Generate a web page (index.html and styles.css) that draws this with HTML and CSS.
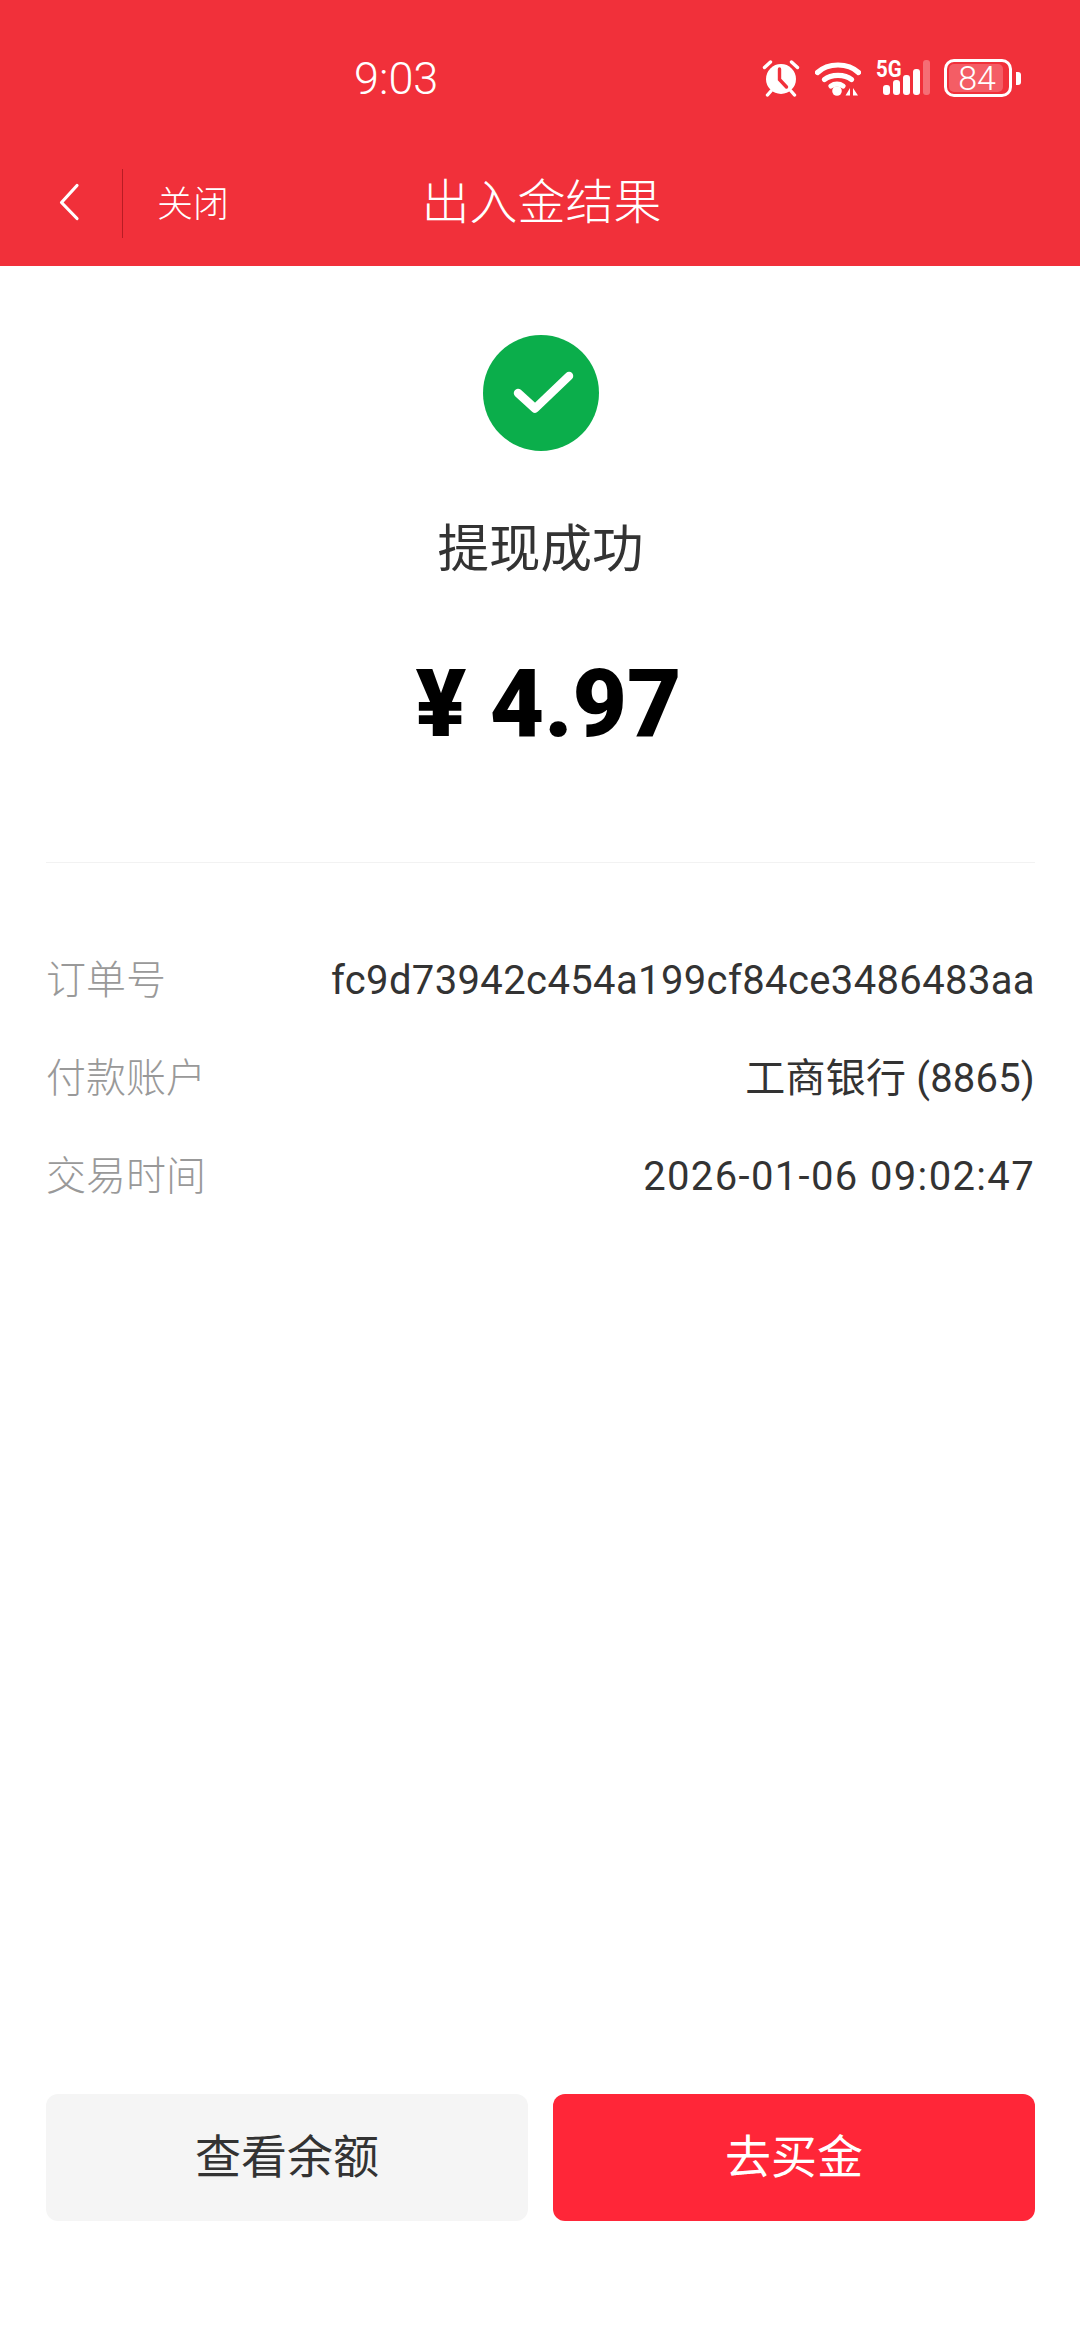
FILE: index.html
```html
<!DOCTYPE html>
<html lang="zh-CN">
<head>
<meta charset="utf-8">
<title>出入金结果</title>
<link rel="stylesheet" href="styles.css">
</head>
<body>
<div class="page">
  <header class="header">
    <div class="status">
      <span class="time">9:03</span>
      <div class="status-icons">
        <svg class="ic-alarm" width="38" height="38" viewBox="0 0 38 38">
          <circle cx="19" cy="20" r="15" fill="#fff"/>
          <path d="M17.500 10V20.500L24.500 28" fill="none" stroke="#f1303a" stroke-width="3.400" stroke-linecap="round"/>
          <path d="M2.500 8.500 8.500 3M35.500 8.500 29.500 3M9 32 5.500 36M29 32 32.500 36" fill="none" stroke="#fff" stroke-width="3.400" stroke-linecap="round"/>
        </svg>
        <svg class="ic-wifi" width="46" height="36" viewBox="0 0 46 36">
          <path d="M2.500 12.500C13 2.500 33 2.500 43.500 12.500M9.500 19.500C16 14 30 14 36.500 19.500M16 26C19.500 23.500 24.500 23.500 28 26" fill="none" stroke="#fff" stroke-width="5.200" stroke-linecap="round"/>
          <circle cx="22" cy="31" r="4.800" fill="#fff"/>
          <path d="M35 28V35.500H30.500ZM38 28V35.500H43Z" fill="#fff"/>
        </svg>
        <div class="signal">
          <span class="five-g">5G</span>
          <div class="bars">
            <i class="bar b1"></i><i class="bar b2"></i><i class="bar b3"></i><i class="bar b4"></i><i class="bar b5"></i>
          </div>
        </div>
        <div class="battery">
          <div class="battery-body">
            <div class="battery-fill"></div>
            <span class="battery-num">84</span>
          </div>
          <i class="battery-nub"></i>
        </div>
      </div>
    </div>
    <nav class="nav">
      <svg class="back" width="22" height="38" viewBox="0 0 22 38">
        <path d="M19 2.500 3.500 19.500 19 35.500" fill="none" stroke="#fff" stroke-width="3.200" stroke-linecap="round" stroke-linejoin="round"/>
      </svg>
      <i class="nav-sep"></i>
      <span class="close">关闭</span>
      <h1 class="title">出入金结果</h1>
    </nav>
  </header>

  <main class="main">
    <section class="result">
      <svg class="check" width="116" height="116" viewBox="0 0 116 116">
        <circle cx="58" cy="58" r="58" fill="#0bae4b"/>
        <path d="M35 58 52 73.500 86 41" fill="none" stroke="#fff" stroke-width="8.500" stroke-linecap="round" stroke-linejoin="round"/>
      </svg>
      <div class="result-text">提现成功</div>
      <div class="amount">¥ 4.97</div>
    </section>

    <dl class="details">
      <div class="row"><dt>订单号</dt><dd class="val-hash">fc9d73942c454a199cf84ce3486483aa</dd></div>
      <div class="row"><dt>付款账户</dt><dd class="val-bank">工商银行 (8865)</dd></div>
      <div class="row"><dt>交易时间</dt><dd class="val-date">2026-01-06 09:02:47</dd></div>
    </dl>

    <div class="actions">
      <button class="btn btn-grey">查看余额</button>
      <button class="btn btn-red">去买金</button>
    </div>
  </main>
</div>
</body>
</html>
```
FILE: styles.css
```css
* { box-sizing: border-box; }
html, body { margin: 0; padding: 0; background: #fff; }
body { font-family: Roboto, "Noto Sans CJK SC", sans-serif; }
.page { width: 1080px; height: 2340px; display: flex; flex-direction: column; overflow: hidden; }

.header { background: #f1303a; color: #fff; height: 266px; display: flex; flex-direction: column; }
.status { height: 156px; padding: 53px 59px 0 354px; display: flex; justify-content: space-between; align-items: flex-start; }
.time { font-size: 45px; line-height: 52px; font-weight: 300; }
.status-icons { display: flex; align-items: flex-start; padding-top: 6px; }
.ic-alarm { display: block; margin-right: 15px; }
.ic-wifi { display: block; margin-right: 15px; margin-top: 1px; }
.signal { position: relative; width: 52px; height: 36px; margin-right: 16px; }
.five-g { position: absolute; left: 0; top: -2px; font-size: 24px; line-height: 24px; font-weight: 700; transform: scaleX(.85); transform-origin: left; }
.bars { position: absolute; left: 7px; bottom: 0; display: flex; align-items: flex-end; gap: 3.500px; }
.bar { display: block; width: 6.500px; background: #fff; border-radius: 3px; }
.b1 { height: 10px; }
.b2 { height: 15px; }
.b3 { height: 20px; }
.b4 { height: 26px; }
.b5 { height: 35px; background: rgba(255,255,255,.3); }
.battery { display: flex; align-items: center; gap: 4px; }
.battery-body { position: relative; width: 68px; height: 38px; border: 3px solid #fff; border-radius: 10px; overflow: hidden; display: flex; align-items: center; justify-content: center; }
.battery-fill { position: absolute; left: 2px; top: 2px; bottom: 2px; width: 54px; background: rgba(255,255,255,.22); border-radius: 5px; }
.battery-num { position: relative; font-size: 34px; line-height: 32px; font-weight: 300; margin-right: 2px; }
.battery-nub { display: block; width: 5px; height: 13px; background: #fff; border-radius: 0 3px 3px 0; }

.nav { position: relative; flex: 1; display: flex; align-items: center; padding-left: 58px; }
.back { display: block; margin-top: -18px; }
.nav-sep { display: block; width: 1px; height: 69px; background: #b81c24; margin: -16px 0 0 42px; }
.close { font-size: 36px; line-height: 44px; margin: -20px 0 0 34px; font-weight: 300; font-family: "Noto Sans CJK SC", sans-serif; }
.title { position: absolute; left: 0; right: 0; top: 8px; margin: 0; text-align: center; font-size: 48px; line-height: 68px; font-weight: 300; padding-left: 3px; font-family: "Noto Sans CJK SC", sans-serif; }

.main { flex: 1; display: flex; flex-direction: column; padding: 0 45px 0 46px; }
.result { display: flex; flex-direction: column; align-items: center; padding-top: 69px; border-bottom: 1px solid #f2f2f2; height: 597px; }
.check { display: block; flex: none; margin-left: 1px; }
.result-text { margin-top: 58px; font-size: 51.500px; line-height: 72px; color: #333; font-family: "Noto Sans CJK SC", sans-serif; }
.amount { margin-top: 68px; margin-left: 16px; font-size: 94px; line-height: 110px; font-weight: 900; color: #000; }

.details { margin: 86px 0 0; display: flex; flex-direction: column; gap: 42px; }
.row { display: flex; justify-content: space-between; align-items: baseline; height: 56px; font-size: 40px; line-height: 56px; }
.row dt { color: #999; font-weight: 300; font-family: "Noto Sans CJK SC", sans-serif; }
.row dd { margin: 0; color: #333; font-weight: 400; }
.val-hash { letter-spacing: .37px; }
.val-bank { letter-spacing: .2px; }
.val-date { letter-spacing: 1.350px; }

.actions { margin-top: auto; margin-bottom: 119px; display: flex; gap: 25px; }
.btn { flex: 1; height: 127px; border: 0; border-radius: 12px; font-size: 46px; font-family: "Noto Sans CJK SC", sans-serif; font-weight: 400; padding: 0 0 10px; }
.btn-grey { background: #f5f5f5; color: #333; }
.btn-red { background: #ff2638; color: #fff; }
```
